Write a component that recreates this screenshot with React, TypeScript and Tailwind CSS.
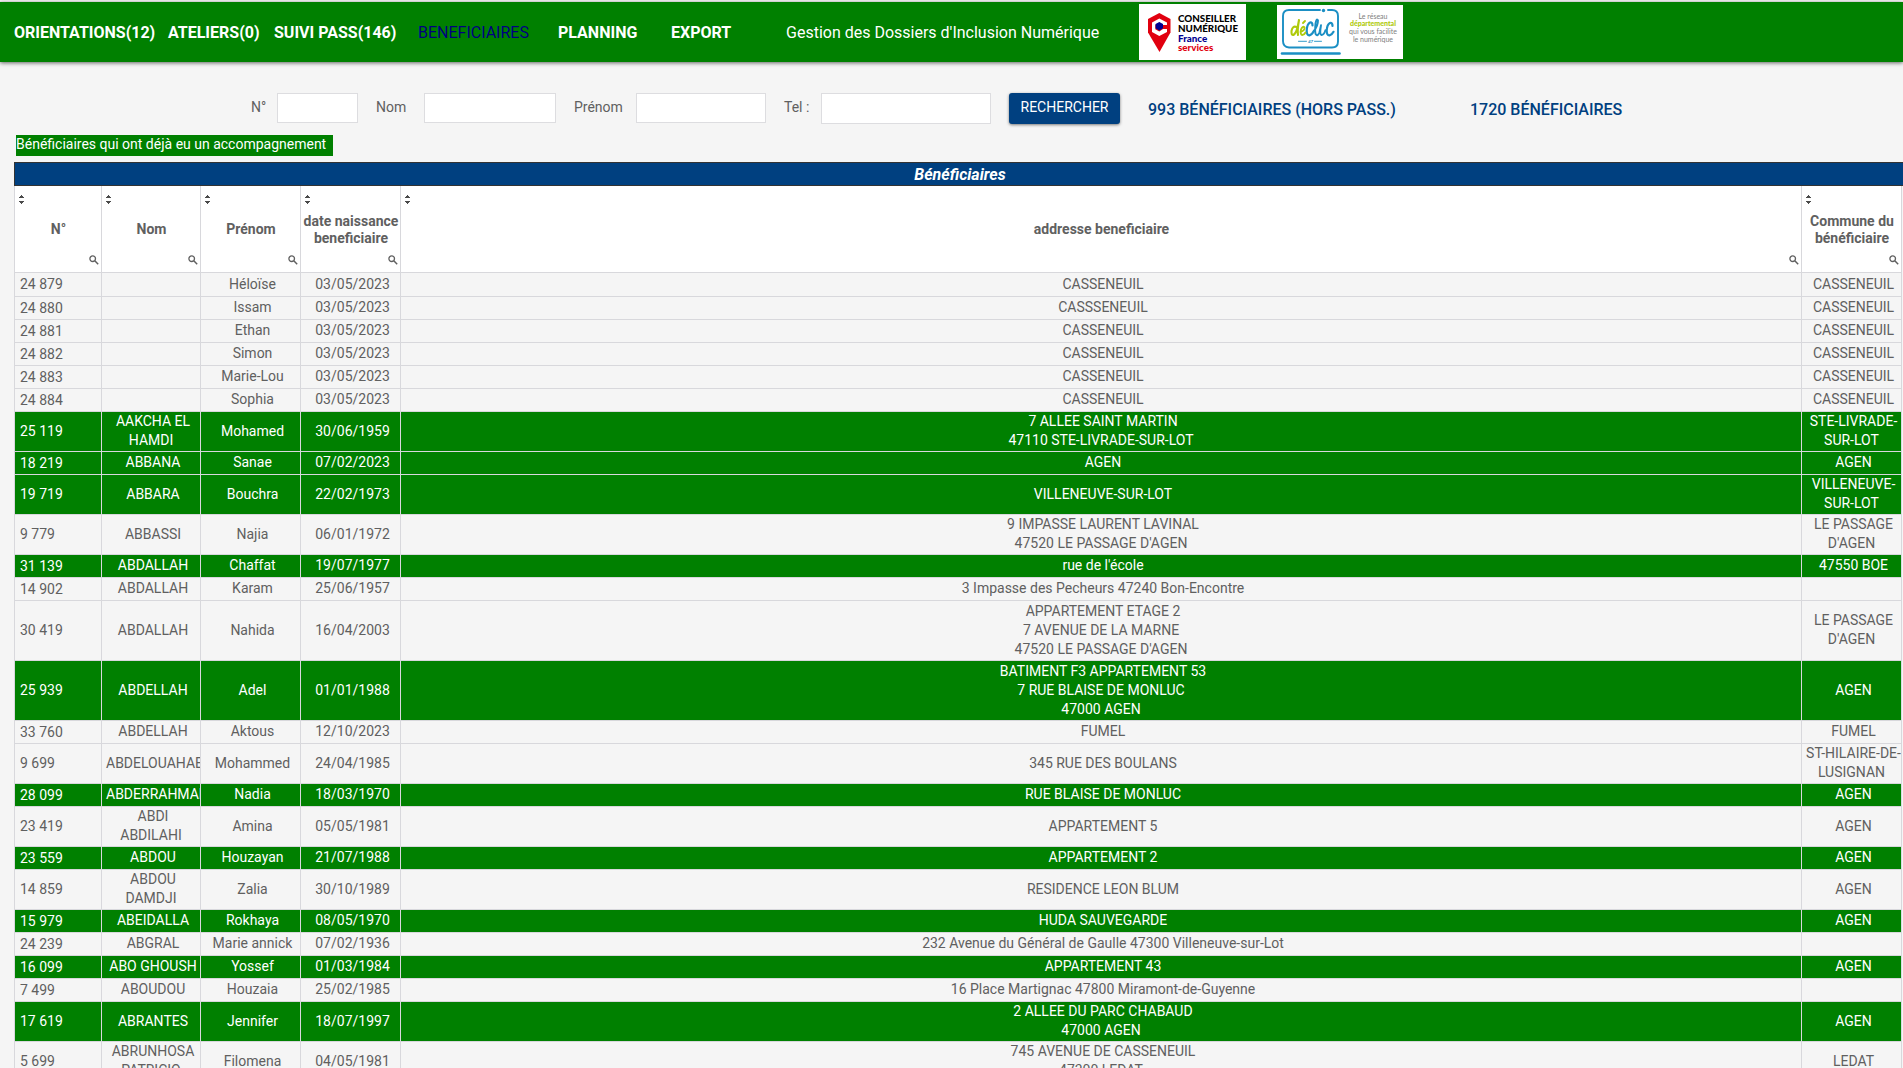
type Row = {
  id: string;
  nom: string[];
  prenom: string;
  date: string;
  adresse: string[];
  commune: string[];
  suivi?: boolean;
};

const r = (
  id: string,
  nom: string,
  prenom: string,
  date: string,
  adresse: string,
  commune: string,
  suivi = false,
): Row => ({
  id,
  nom: nom.split("|"),
  prenom,
  date,
  adresse: adresse.split("|"),
  commune: commune.split("|"),
  suivi,
});

const rows: Row[] = [
  r("24 879", "", "Héloïse", "03/05/2023", "CASSENEUIL", "CASSENEUIL"),
  r("24 880", "", "Issam", "03/05/2023", "CASSSENEUIL", "CASSENEUIL"),
  r("24 881", "", "Ethan", "03/05/2023", "CASSENEUIL", "CASSENEUIL"),
  r("24 882", "", "Simon", "03/05/2023", "CASSENEUIL", "CASSENEUIL"),
  r("24 883", "", "Marie-Lou", "03/05/2023", "CASSENEUIL", "CASSENEUIL"),
  r("24 884", "", "Sophia", "03/05/2023", "CASSENEUIL", "CASSENEUIL"),
  r("25 119", "AAKCHA EL|HAMDI", "Mohamed", "30/06/1959", "7 ALLEE SAINT MARTIN|47110 STE-LIVRADE-SUR-LOT", "STE-LIVRADE-|SUR-LOT", true),
  r("18 219", "ABBANA", "Sanae", "07/02/2023", "AGEN", "AGEN", true),
  r("19 719", "ABBARA", "Bouchra", "22/02/1973", "VILLENEUVE-SUR-LOT", "VILLENEUVE-|SUR-LOT", true),
  r("9 779", "ABBASSI", "Najia", "06/01/1972", "9 IMPASSE LAURENT LAVINAL|47520 LE PASSAGE D'AGEN", "LE PASSAGE|D'AGEN"),
  r("31 139", "ABDALLAH", "Chaffat", "19/07/1977", "rue de l'école", "47550 BOE", true),
  r("14 902", "ABDALLAH", "Karam", "25/06/1957", "3 Impasse des Pecheurs 47240 Bon-Encontre", ""),
  r("30 419", "ABDALLAH", "Nahida", "16/04/2003", "APPARTEMENT ETAGE 2|7 AVENUE DE LA MARNE|47520 LE PASSAGE D'AGEN", "LE PASSAGE|D'AGEN"),
  r("25 939", "ABDELLAH", "Adel", "01/01/1988", "BATIMENT F3 APPARTEMENT 53|7 RUE BLAISE DE MONLUC|47000 AGEN", "AGEN", true),
  r("33 760", "ABDELLAH", "Aktous", "12/10/2023", "FUMEL", "FUMEL"),
  r("9 699", "ABDELOUAHAB", "Mohammed", "24/04/1985", "345 RUE DES BOULANS", "ST-HILAIRE-DE-|LUSIGNAN"),
  r("28 099", "ABDERRAHMANE", "Nadia", "18/03/1970", "RUE BLAISE DE MONLUC", "AGEN", true),
  r("23 419", "ABDI|ABDILAHI", "Amina", "05/05/1981", "APPARTEMENT 5", "AGEN"),
  r("23 559", "ABDOU", "Houzayan", "21/07/1988", "APPARTEMENT 2", "AGEN", true),
  r("14 859", "ABDOU|DAMDJI", "Zalia", "30/10/1989", "RESIDENCE LEON BLUM", "AGEN"),
  r("15 979", "ABEIDALLA", "Rokhaya", "08/05/1970", "HUDA SAUVEGARDE", "AGEN", true),
  r("24 239", "ABGRAL", "Marie annick", "07/02/1936", "232 Avenue du Général de Gaulle 47300 Villeneuve-sur-Lot", ""),
  r("16 099", "ABO GHOUSH", "Yossef", "01/03/1984", "APPARTEMENT 43", "AGEN", true),
  r("7 499", "ABOUDOU", "Houzaia", "25/02/1985", "16 Place Martignac 47800 Miramont-de-Guyenne", ""),
  r("17 619", "ABRANTES", "Jennifer", "18/07/1997", "2 ALLEE DU PARC CHABAUD|47000 AGEN", "AGEN", true),
  r("5 699", "ABRUNHOSA|PATRICIO", "Filomena", "04/05/1981", "745 AVENUE DE CASSENEUIL|47300 LEDAT", "LEDAT"),
];

const columns = [
  ["N°"],
  ["Nom"],
  ["Prénom"],
  ["date naissance", "beneficiaire"],
  ["addresse beneficiaire"],
  ["Commune du", "bénéficiaire"],
];

function SortIcon() {
  return (
    <svg width="5" height="9" viewBox="0 0 5 9" fill="#4a4a4a" aria-hidden="true" className="block">
      <path d="M2 0h1v1h1v1h1v1H0V2h1V1h1z" />
      <path d="M0 6h5v1H4v1H3v1H2V8H1V7H0z" />
    </svg>
  );
}

function SearchIcon() {
  return (
    <svg width="10" height="10" viewBox="0 0 10 10" fill="none" stroke="#606060" aria-hidden="true" className="block">
      <circle cx="3.7" cy="3.7" r="2.8" strokeWidth="1.3" />
      <path d="M5.8 5.8 9.2 9.2" strokeWidth="1.5" />
    </svg>
  );
}

function Lines({ lines }: { lines: string[] }) {
  return (
    <div className="overflow-hidden whitespace-nowrap indent-1">
      {lines.map((line, i) => (
        <span key={i}>
          {i > 0 && <br />}
          {line}
        </span>
      ))}
    </div>
  );
}

function ConseillerLogo() {
  return (
    <svg width="107" height="56" viewBox="0 0 107 56" role="img" aria-label="Conseiller numérique France services">
      <rect width="107" height="56" fill="#fff" />
      <path d="M20.300 9 31.500 15V28.500L20.500 48 9 28.500V15z" fill="#e1000f" />
      <path d="M20.300 14.500 28 18.500v2.500h-4l-3.700-2.500-4 2.300v4.400l4 2.300 3.700-2.500h4V28l-7.700 4-7.300-4v-9.500z" fill="#fff" />
      <path d="M20.300 18 24 20.100v4.200l-3.700 2.200-3.700-2.200v-4.200z" fill="#000091" />
      <g fontFamily="Lato, sans-serif" fontWeight="900" fontSize="9.800">
        <text x="39" y="18">CONSEILLER</text>
        <text x="39" y="27.500">NUMÉRIQUE</text>
        <text x="39" y="37.500" fill="#000091">France</text>
        <text x="39" y="46.500" fill="#e1000f">services</text>
      </g>
    </svg>
  );
}

function DeclicLogo() {
  return (
    <svg width="126" height="54" viewBox="0 0 126 54" role="img" aria-label="Déclic 47, le réseau départemental qui vous facilite le numérique">
      <rect width="126" height="54" fill="#fff" />
      <g fill="none" stroke="#1b8fc4" strokeLinecap="round" strokeLinejoin="round">
        <path d="M43 5H12Q6 5 6 11v25q0 6 6 6.500h43q6 0 6-6V11q0-6-6-6h-4" strokeWidth="1.900" />
        <path d="M5 48.500h57.500" strokeWidth="2.600" />
        <path d="M21.500 36.300h8M37.500 36.300h7" strokeWidth="0.900" />
        <path d="M35.500 20.500q0-3.500-2.500-3-3 1.500-3.300 8 0 5 2.800 4.800 2.500-0.500 4.500-4.500" strokeWidth="2.200" />
        <path d="M37 25.800q4-5 4-10.500-1.500-2.500-2.500 3-0.800 8 0.200 11 1.800 2.500 3.800-2l1.500-7q-1.500 9 0.500 9.800 2.500 0 4-5" strokeWidth="1.900" />
        <path d="M55.500 21q0-3.500-2.500-3-3 1.500-3.300 7.500 0 5 2.800 4.800 2.500-0.500 4-3.500" strokeWidth="2.200" />
      </g>
      <circle cx="46.500" cy="5.500" r="1.700" fill="#1b8fc4" />
      <g fill="none" stroke="#afca0b" strokeLinecap="round" strokeLinejoin="round">
        <path d="M19.500 22q-4-1.500-5 4-0.300 4.500 2 4 3.500-2 5.500-15-1.800 10-1 15" strokeWidth="2.100" />
        <path d="M23.500 27q4.500-1.500 4-4.500-1.800-2-3.500 2-1 5 1.200 5.500 2 0 3.300-2.500M26 18l2-2" strokeWidth="1.900" />
      </g>
      <text x="33.500" y="38" textAnchor="middle" fill="#1b8fc4" fontFamily="Lato, sans-serif" fontWeight="900" fontStyle="italic" fontSize="4.500">47</text>
      <g fontFamily="Lato, sans-serif" fontSize="7" textAnchor="middle" fill="#808080">
        <text x="96" y="13.500">Le réseau</text>
        <text x="96" y="21" fill="#afca0b" fontWeight="900">départemental</text>
        <text x="96" y="29">qui vous facilite</text>
        <text x="96" y="36.500">le numérique</text>
      </g>
    </svg>
  );
}

const field = "border border-[#dddde0] bg-white px-2 text-sm text-[#606060] outline-none";

export default function App() {
  return (
    <div className="h-screen overflow-x-hidden overflow-y-auto bg-[#f5f5f5] font-[Roboto,sans-serif] text-[#606060] [scrollbar-width:none]">
      <header className="mt-[2px] flex h-[60px] items-center bg-[#008000] pl-[14px] text-base whitespace-nowrap text-white shadow-[0_1px_4px_rgba(0,0,0,0.6)]">
        <nav className="flex items-center pt-[2px] font-bold">
          <a href="#orientations" className="w-[154px]">ORIENTATIONS(12)</a>
          <a href="#ateliers" className="w-[106px]">ATELIERS(0)</a>
          <a href="#suivi" className="w-[144px]">SUIVI PASS(146)</a>
          <a href="#beneficiaires" aria-current="page" className="w-[140px] font-normal text-[#000080]">BENEFICIAIRES</a>
          <a href="#planning" className="w-[113px]">PLANNING</a>
          <a href="#export" className="w-[115px]">EXPORT</a>
        </nav>
        <span className="w-[353px] pt-[2px]">Gestion des Dossiers d'Inclusion Numérique</span>
        <div className="flex items-center gap-[31px]">
          <ConseillerLogo />
          <DeclicLogo />
        </div>
      </header>

      <form className="mt-[30px] flex h-8 items-center pl-[251px] text-sm whitespace-nowrap" onSubmit={(e) => e.preventDefault()}>
        <label htmlFor="numero" className="w-[26px] pb-[2px]">N°</label>
        <input id="numero" className={`${field} h-[30px] w-[81px]`} />
        <label htmlFor="nom" className="ml-[18px] w-12 pb-[2px]">Nom</label>
        <input id="nom" className={`${field} h-[30px] w-[132px]`} />
        <label htmlFor="prenom" className="ml-[18px] w-[62px] pb-[2px]">Prénom</label>
        <input id="prenom" className={`${field} h-[30px] w-[130px]`} />
        <label htmlFor="tel" className="ml-[18px] w-[37px] pb-[2px]">Tel :</label>
        <input id="tel" className={`${field} h-[31px] w-[170px]`} />
        <button type="submit" className="ml-[18px] h-[31px] w-[111px] rounded-[3px] bg-[#004080] pb-[2px] text-white shadow-[0_1px_3px_rgba(0,0,0,0.5)]">
          RECHERCHER
        </button>
        <span className="mt-[3px] ml-7 w-[322px] text-base font-medium text-[#004080]">993 BÉNÉFICIAIRES (HORS PASS.)</span>
        <span className="mt-[3px] text-base font-medium text-[#004080]">1720 BÉNÉFICIAIRES</span>
      </form>

      <p className="mt-[11px] ml-4 h-[21px] w-[317px] bg-[#008000] text-sm leading-[19px] whitespace-nowrap text-white">
        Bénéficiaires qui ont déjà eu un accompagnement
      </p>

      <h1 className="mt-[6px] ml-[14px] h-6 border border-r-0 border-[#333333] bg-[#004080] pl-[2px] text-center text-base leading-[23px] font-bold text-white italic">
        Bénéficiaires
      </h1>
      <div className="pr-px pl-[14px]">
        <table className="w-full table-fixed border-collapse text-sm leading-[19px]">
          <colgroup>
            <col className="w-[87px]" />
            <col className="w-[99px]" />
            <col className="w-[100px]" />
            <col className="w-[100px]" />
            <col />
            <col className="w-[100px]" />
          </colgroup>
          <thead>
            <tr className="h-[86px] bg-white">
              {columns.map((lines, i) => (
                <th key={i} className="border border-t-0 border-[#d8d8dc] p-0 leading-[17px] font-bold">
                  <div className="flex h-[85px] flex-col justify-between pt-[9px] pb-[6px] pl-px">
                    <button type="button" aria-label="Trier" className="ml-[3px] self-start"><SortIcon /></button>
                    <div className="whitespace-nowrap">
                      {lines.map((l) => (
                        <div key={l}>{l}</div>
                      ))}
                    </div>
                    <button type="button" aria-label="Rechercher" className="mr-[2px] self-end"><SearchIcon /></button>
                  </div>
                </th>
              ))}
            </tr>
          </thead>
          <tbody className="[&_td]:border [&_td]:border-[#d8d8dc] [&_td]:p-0">
            {rows.map((row, i) => {
              const n = Math.max(row.nom.length, row.adresse.length, row.commune.length);
              const height = n === 3 ? "h-[60px]" : n === 2 ? "h-10" : i === 0 ? "h-6" : "h-[23px]";
              return (
                <tr key={row.id} className={`${height} text-center ${row.suivi ? "bg-[#008000] text-white" : ""}`}>
                  <td className="text-left">
                    <div className="pt-px pl-[5px]">{row.id}</div>
                  </td>
                  <td><Lines lines={row.nom} /></td>
                  <td><Lines lines={[row.prenom]} /></td>
                  <td><Lines lines={[row.date]} /></td>
                  <td><Lines lines={row.adresse} /></td>
                  <td><Lines lines={row.commune} /></td>
                </tr>
              );
            })}
          </tbody>
        </table>
      </div>
    </div>
  );
}
